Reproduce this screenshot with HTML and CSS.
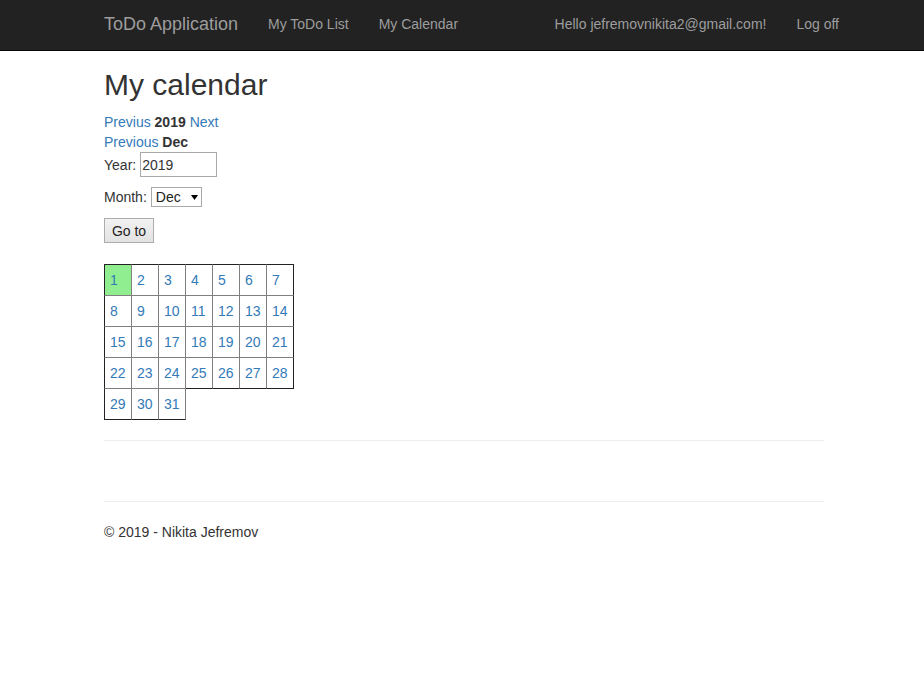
FILE: index.html
```html
<!DOCTYPE html>
<html>
<head>
<meta charset="utf-8">
<title>My calendar</title>
<link rel="stylesheet" href="styles.css">
</head>
<body>
<nav class="navbar">
  <div class="nav-inner">
    <a class="brand" href="#">ToDo Application</a>
    <ul class="nav-links">
      <li><a href="#">My ToDo List</a></li>
      <li><a href="#">My Calendar</a></li>
    </ul>
    <ul class="nav-links nav-right">
      <li><a href="#">Hello jefremovnikita2@gmail.com!</a></li>
      <li><a href="#" class="last">Log off</a></li>
    </ul>
  </div>
</nav>
<main class="container">
  <h1 class="title">My calendar</h1>
  <div class="line"><a href="#">Previus</a> <b>2019</b> <a href="#">Next</a></div>
  <div class="line"><a href="#">Previous</a> <b>Dec</b></div>
  <form class="goto-form">
    <div class="field field-year"><span class="label">Year:</span><input class="year-input" type="text" value="2019"></div>
    <div class="field field-month"><span class="label">Month:</span><span class="fake-select">Dec<svg class="caret" width="7" height="5" viewBox="0 0 7 5"><path d="M0 0H7L3.5 5Z" fill="#000"/></svg></span></div>
    <div class="field field-btn"><button type="button" class="btn">Go to</button></div>
  </form>
  <table class="cal">
    <tr><td class="today"><a href="#">1</a></td><td><a href="#">2</a></td><td><a href="#">3</a></td><td><a href="#">4</a></td><td><a href="#">5</a></td><td><a href="#">6</a></td><td><a href="#">7</a></td></tr>
    <tr><td><a href="#">8</a></td><td><a href="#">9</a></td><td><a href="#">10</a></td><td><a href="#">11</a></td><td><a href="#">12</a></td><td><a href="#">13</a></td><td><a href="#">14</a></td></tr>
    <tr><td><a href="#">15</a></td><td><a href="#">16</a></td><td><a href="#">17</a></td><td><a href="#">18</a></td><td><a href="#">19</a></td><td><a href="#">20</a></td><td><a href="#">21</a></td></tr>
    <tr><td><a href="#">22</a></td><td><a href="#">23</a></td><td><a href="#">24</a></td><td class="edge-b"><a href="#">25</a></td><td class="edge-b"><a href="#">26</a></td><td class="edge-b"><a href="#">27</a></td><td class="edge-b"><a href="#">28</a></td></tr>
    <tr><td class="edge-b"><a href="#">29</a></td><td class="edge-b"><a href="#">30</a></td><td class="edge-b"><a href="#">31</a></td></tr>
  </table>
  <hr class="rule">
  <div class="spacer"></div>
  <hr class="rule">
  <footer class="footer">
    <p>&copy; 2019 - Nikita Jefremov</p>
  </footer>
</main>
</body>
</html>
```

FILE: styles.css
```css
* { box-sizing: border-box; }
html, body { margin: 0; padding: 0; }
body {
  font-family: "Liberation Sans", Arial, Helvetica, sans-serif;
  font-size: 14px;
  line-height: 20px;
  color: #333;
  background: #fff;
}
a { color: #337ab7; text-decoration: none; }

.navbar {
  height: 51px;
  background: #222;
  border-bottom: 1px solid #080808;
}
.nav-inner {
  margin-left: calc(50% - 358px);
  width: 735px;
  height: 48px;
  display: flex;
  align-items: center;
}
.brand {
  width: 149px;
  flex-shrink: 0;
  font-size: 18px;
  line-height: 20px;
  color: #9d9d9d;
}
.nav-links {
  list-style: none;
  margin: 0;
  padding: 0;
  display: flex;
}
.nav-links a {
  display: block;
  padding: 0 15px;
  color: #9d9d9d;
  line-height: 20px;
}
.nav-right { margin-left: auto; }
.nav-right a.last { padding-right: 0; }

.container {
  margin-left: calc(50% - 358px);
  width: 720px;
}
.title {
  font-size: 30px;
  font-weight: 500;
  line-height: 33px;
  margin: 17px 0 11px;
  color: #333;
}
.line { height: 20px; }

.goto-form { margin: 0; }
.field {
  display: flex;
  align-items: center;
  margin-bottom: 11px;
}
.label { margin-right: 4px; }
.field-year { height: 25px; margin-bottom: 10px; }
.field-month { height: 20px; }
.field-btn { height: 25px; margin-bottom: 21px; }
.year-input {
  width: 77px;
  height: 25px;
  border: 1px solid #a9a9a9;
  padding: 0 2px 0 1px;
  margin: 0;
  font-family: "Liberation Sans", Arial, sans-serif;
  font-size: 14px;
  color: #333;
}
.fake-select {
  display: inline-flex;
  align-items: center;
  width: 51px;
  height: 20px;
  border: 1px solid #a9a9a9;
  padding: 0 0 0 4px;
  color: #222;
  line-height: 18px;
  background: #fff;
}
.caret { margin-left: 10px; }
.btn {
  width: 50px;
  height: 25px;
  padding: 0;
  margin: 0;
  font-family: "Liberation Sans", Arial, sans-serif;
  font-size: 14px;
  color: #222;
  background: linear-gradient(#f2f2f2, #e2e2e2);
  border: 1px solid #adadad;
  border-radius: 0;
}

.cal {
  border-collapse: separate;
  border-spacing: 0;
  margin-top: 0;
}
.cal td {
  width: 27px;
  height: 31px;
  padding: 5px;
  border-right: 1px solid #808080;
  border-bottom: 1px solid #808080;
  vertical-align: middle;
}
.cal td:first-child { border-left: 1px solid #222; width: 28px; }
.cal tr:first-child td { border-top: 1px solid #222; height: 32px; }
.cal td:nth-child(7) { border-right-color: #222; }
.cal td.edge-b { border-bottom-color: #222; }
.cal td.today { background: #90ee90; }

.rule {
  margin: 20px 0;
  border: 0;
  border-top: 1px solid #eee;
  height: 0;
}
.spacer { height: 20px; }
.footer p { margin: 0 0 10px; }
```
